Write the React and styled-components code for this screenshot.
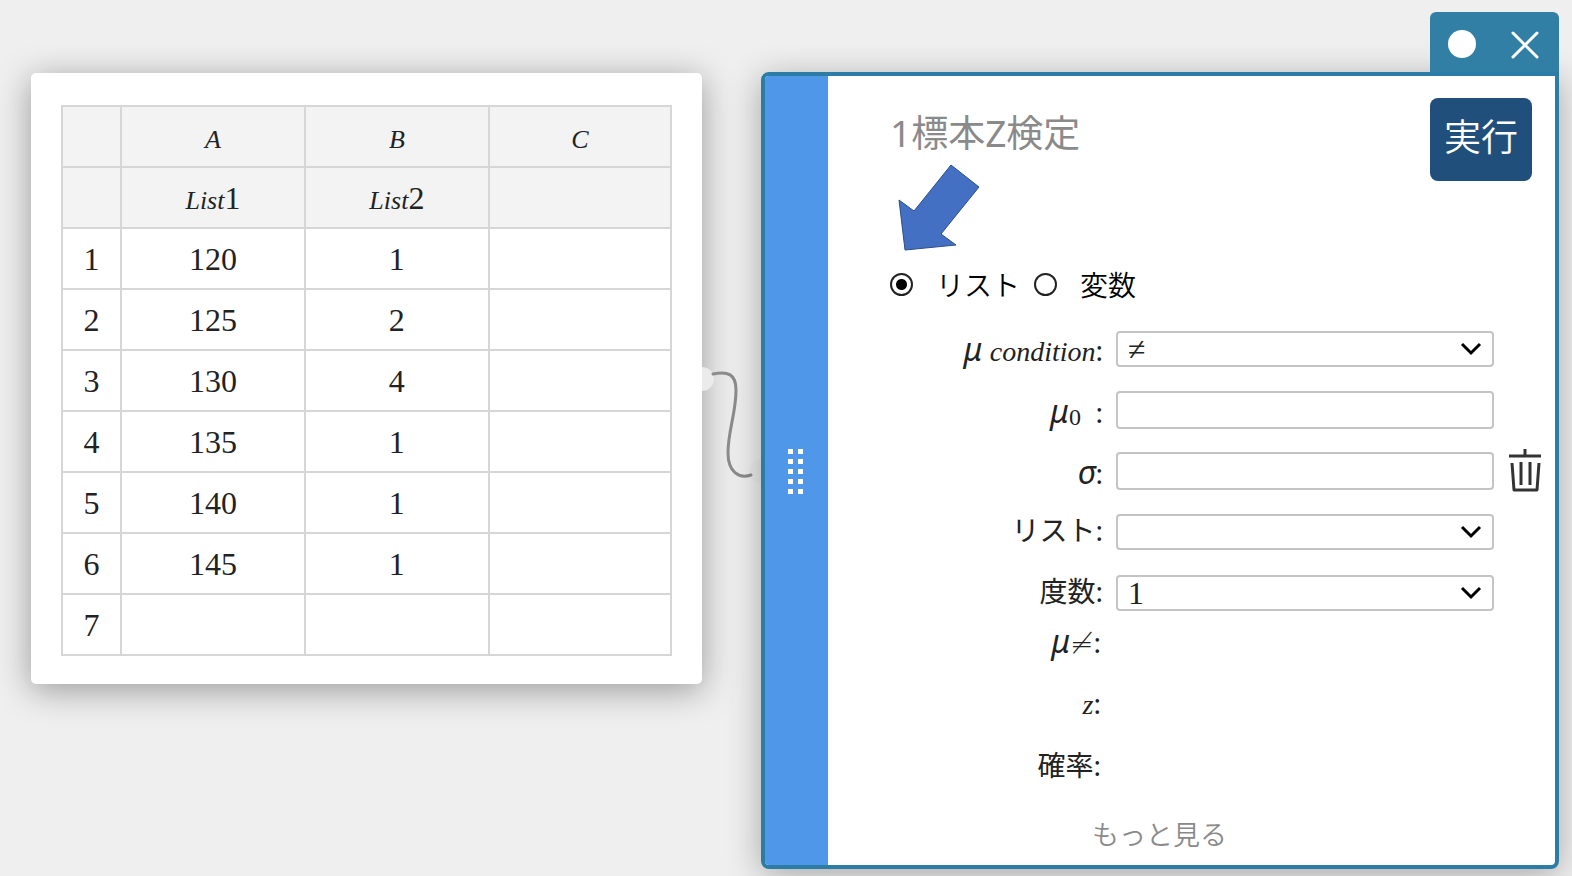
import { useState } from 'react'
import styled, { createGlobalStyle } from 'styled-components'

const rows = [
  ['120', '1', ''],
  ['125', '2', ''],
  ['130', '4', ''],
  ['135', '1', ''],
  ['140', '1', ''],
  ['145', '1', ''],
  ['', '', '']
]

const DataTable = () => (
  <SheetCard>
    <Sheet>
      <colgroup>
        <IndexCol />
        <DataCol />
        <DataCol />
        <col />
      </colgroup>
      <thead>
        <tr>
          <HeadCell />
          <HeadCell><Italic>A</Italic></HeadCell>
          <HeadCell><Italic>B</Italic></HeadCell>
          <HeadCell><Italic>C</Italic></HeadCell>
        </tr>
        <tr>
          <HeadCell />
          <HeadCell><Italic>List</Italic>1</HeadCell>
          <HeadCell><Italic>List</Italic>2</HeadCell>
          <HeadCell />
        </tr>
      </thead>
      <tbody>
        {rows.map((row, i) => (
          <tr key={i}>
            <RowHead scope='row'>{i + 1}</RowHead>
            {row.map((value, j) => <Cell key={j}>{value}</Cell>)}
          </tr>
        ))}
      </tbody>
    </Sheet>
  </SheetCard>
)

const Connector = () => (
  <ConnectorSvg viewBox='0 0 59 124' aria-hidden='true'>
    <path d='M0 15a12 12 0 0 1 0 24z' fill='#ebebeb' />
    <path d='M59 107a12 12 0 0 0 0 24z' fill='#ebebeb' />
    <path d='M11 22C26 19 34 22 34 38C34 62 26 78 26 101C26 120 37 127 49 123' fill='none' stroke='#8c8c8c' strokeWidth='3' strokeLinecap='round' />
  </ConnectorSvg>
)

const SelectField = ({ id, options }) => (
  <SelectWrap>
    <Select id={id} defaultValue={options[0]}>
      {options.map(option => <option key={option} value={option}>{option}</option>)}
    </Select>
    <Chevron viewBox='0 0 22 14' aria-hidden='true'>
      <path d='M2 2L11 11L20 2' fill='none' stroke='#000' strokeWidth='3' />
    </Chevron>
  </SelectWrap>
)

const TestForm = () => {
  const [source, setSource] = useState('list')
  const onChange = (e) => setSource(e.target.value)

  return (
    <Form onSubmit={(e) => e.preventDefault()}>
      <Header>
        <div>
          <Title>1標本Z検定</Title>
          <Arrow viewBox='0 0 82 88' aria-hidden='true'>
            <path d='M53 1L81 23L43 70L58 81L7 86L1 36L16 47Z' fill='#4470c4' stroke='#2b5089' strokeWidth='1' />
          </Arrow>
        </div>
        <RunButton type='submit'>実行</RunButton>
      </Header>

      <RadioRow>
        <Radio id='source-list' type='radio' name='source' value='list' checked={source === 'list'} onChange={onChange} />
        <RadioLabel htmlFor='source-list'>リスト</RadioLabel>
        <Radio id='source-var' type='radio' name='source' value='var' checked={source === 'var'} onChange={onChange} />
        <RadioLabel htmlFor='source-var'>変数</RadioLabel>
      </RadioRow>

      <Fields>
        <MathLabel htmlFor='condition'><Symbol>μ</Symbol> <Italic $size={28}>condition</Italic>:</MathLabel>
        <SelectField id='condition' options={['≠', '<', '>']} />

        <MathLabel htmlFor='mu0'><Symbol>μ</Symbol><Sub>0</Sub>&nbsp; :</MathLabel>
        <Input id='mu0' type='text' />

        <MathLabel htmlFor='sigma'><Symbol>σ</Symbol>:</MathLabel>
        <Input id='sigma' type='text' />
        <TrashButton type='button' aria-label='削除'>
          <svg width='34' height='44' viewBox='0 0 34 44' fill='none' stroke='#333' strokeWidth='3'>
            <path d='M1 7H33M17 0V7' />
            <path d='M4 14L6 41H29L31 14' strokeLinejoin='round' />
            <path d='M13 13V36M22 13V36' />
          </svg>
        </TrashButton>

        <Label htmlFor='list'>リスト:</Label>
        <SelectField id='list' options={['', 'List1', 'List2']} />

        <Label htmlFor='freq'>度数:</Label>
        <SelectField id='freq' options={['1', 'List1', 'List2']} />
      </Fields>

      <Results>
        <Result><Symbol>μ</Symbol><Operator>≠</Operator>:</Result>
        <Result><Italic $size={28}>z</Italic>:</Result>
        <Result>確率:</Result>
      </Results>

      <MoreButton type='button'>もっと見る</MoreButton>
    </Form>
  )
}

const App = () => (
  <Page>
    <GlobalStyle />
    <DataTable />
    <Connector />
    <Window>
      <WindowTab>
        <TabButton type='button' aria-label='色'>
          <svg width='30' height='30' viewBox='0 0 30 30'>
            <circle cx='15' cy='15' r='14' fill='#fff' />
          </svg>
        </TabButton>
        <TabButton type='button' aria-label='閉じる'>
          <svg width='30' height='30' viewBox='0 0 30 30'>
            <path d='M3 4L27 28M27 4L3 28' stroke='#fff' strokeWidth='3' strokeLinecap='round' />
          </svg>
        </TabButton>
      </WindowTab>
      <Panel>
        <Handle>
          {Array.from({ length: 10 }, (_, i) => <Dot key={i} />)}
        </Handle>
        <TestForm />
      </Panel>
    </Window>
  </Page>
)

const sans = `'Noto Sans', 'Noto Sans CJK JP', sans-serif`
const serif = `'Liberation Serif', 'Noto Sans CJK JP', serif`

const GlobalStyle = createGlobalStyle`
  * {
    box-sizing: border-box;
  }

  body {
    margin: 0;
    background: #efefef;
    color: #222;
    font-family: ${sans};
  }
`;

const Page = styled.main`
  display: grid;
  grid-template-columns: minmax(0, 671fr) 59px minmax(0, 798fr);
  align-items: start;
  min-height: 100vh;
  padding: 12px 13px 8px 31px;
  overflow: hidden;
`;

const SheetCard = styled.section`
  margin-top: 61px;
  padding: 32px 30px 28px;
  background: #fff;
  border-radius: 5px;
  box-shadow: 0 6px 34px rgba(0, 0, 0, 0.36);
`;

const Sheet = styled.table`
  width: 100%;
  table-layout: fixed;
  border-collapse: collapse;
  font-family: ${serif};
  font-size: 32px;
  line-height: 36px;
`;

const IndexCol = styled.col`
  width: 59px;
`;

const DataCol = styled.col`
  width: 30.2%;
`;

const Cell = styled.td`
  height: 61px;
  padding: 0;
  border: 2px solid #d6d6d6;
  text-align: center;
`;

const HeadCell = styled(Cell).attrs({ as: 'th' })`
  padding-top: 3px;
  background: #f3f3f3;
  font-weight: 400;
`;

const RowHead = styled(Cell).attrs({ as: 'th' })`
  font-weight: 400;
`;

const Italic = styled.i`
  font-family: ${serif};
  font-size: ${({ $size }) => $size || 26}px;
`;

const ConnectorSvg = styled.svg`
  width: 59px;
  height: 124px;
  margin-top: 340px;
  overflow: visible;
`;

const Window = styled.section`
  display: flex;
  flex-direction: column;
`;

const WindowTab = styled.div`
  position: relative;
  z-index: 1;
  display: flex;
  align-self: flex-end;
  align-items: center;
  justify-content: space-between;
  width: 129px;
  height: 60px;
  padding: 4px 19px 0 17px;
  background: #317fa5;
  border-radius: 6px 6px 0 0;
`;

const TabButton = styled.button`
  display: flex;
  padding: 0;
  border: 0;
  background: none;
  cursor: pointer;
`;

const Panel = styled.div`
  display: flex;
  border: 4px solid #2c7da5;
  border-radius: 8px 0 8px 8px;
  background: #fff;
  box-shadow: 0 6px 34px rgba(0, 0, 0, 0.3);
`;

const Handle = styled.div`
  display: grid;
  grid-template-columns: 5px 5px;
  grid-auto-rows: 5px;
  gap: 5px;
  place-content: center;
  width: 63px;
  padding: 2px 3px 0 0;
  border-radius: 4px 0 0 4px;
  background: #4e97e9;
`;

const Dot = styled.span`
  background: #fff;
`;

const Form = styled.form`
  flex: 1;
  min-width: 0;
  padding: 22px 12px 12px 62px;
`;

const Header = styled.header`
  display: flex;
  align-items: flex-start;
  justify-content: space-between;
  padding-right: 11px;
`;

const Title = styled.h1`
  margin: 8px 0 0;
  color: #8a8a8a;
  font-size: 37px;
  font-weight: 400;
  line-height: 54px;
`;

const Arrow = styled.svg`
  display: block;
  width: 82px;
  height: 88px;
  margin: 4px 0 0 8px;
`;

const RunButton = styled.button`
  width: 102px;
  height: 83px;
  padding: 0 0 6px;
  border: 0;
  border-radius: 8px;
  background: #204f7b;
  color: #fff;
  font-family: ${sans};
  font-size: 37px;
  font-weight: 350;
  line-height: 48px;
  cursor: pointer;
`;

const RadioRow = styled.div`
  display: flex;
  align-items: center;
  height: 48px;
  margin-top: 8px;
`;

const Radio = styled.input`
  appearance: none;
  width: 23px;
  height: 23px;
  margin: 0;
  border: 2px solid #222;
  border-radius: 50%;

  &:checked {
    background: radial-gradient(circle, #000 5px, #fff 6px);
  }
`;

const RadioLabel = styled.label`
  margin: 0 14px 0 23px;
  font-size: 28px;
  font-weight: 350;
  color: #000;
`;

const Fields = styled.div`
  display: grid;
  grid-template-columns: 213px minmax(0, 1fr) 36px;
  grid-auto-rows: 61px;
  align-items: center;
  column-gap: 13px;
  margin-top: 10px;
`;

const Label = styled.label`
  grid-column: 1;
  padding-bottom: 4px;
  font-size: 28px;
  font-weight: 400;
  line-height: 40px;
  text-align: right;
  white-space: nowrap;
`;

const MathLabel = styled(Label)`
  padding: 4px 0 0;
`;

const Symbol = styled.i`
  font-family: ${sans};
  font-size: 32px;
  font-weight: 400;
  line-height: 36px;
`;

const Operator = styled.span`
  font-family: 'DejaVu Sans', sans-serif;
  font-size: 28px;
  font-weight: 200;
  line-height: 32px;
`;

const Sub = styled.sub`
  font-family: ${serif};
  font-size: 24px;
  line-height: 0;
  vertical-align: -2px;
`;

const Input = styled.input`
  width: 100%;
  height: 38px;
  padding: 0 12px;
  border: 2px solid #c4c4c4;
  border-radius: 4px;
  background: #fff;
  font-family: ${serif};
  font-size: 32px;
`;

const SelectWrap = styled.div`
  position: relative;
`;

const Select = styled.select`
  display: block;
  appearance: none;
  width: 100%;
  height: 36px;
  padding: 0 40px 0 10px;
  border: 2px solid #c4c4c4;
  border-radius: 4px;
  background: #fff;
  color: #222;
  font-family: ${serif};
  font-size: 32px;
  line-height: 32px;
`;

const Chevron = styled.svg`
  position: absolute;
  top: 11px;
  right: 12px;
  width: 22px;
  height: 14px;
  pointer-events: none;
`;

const TrashButton = styled.button`
  padding: 0;
  border: 0;
  background: none;
  line-height: 0;
  cursor: pointer;
`;

const Results = styled.div`
  display: grid;
  grid-auto-rows: 62px;
  width: 211px;
`;

const Result = styled.p`
  margin: 0;
  font-size: 28px;
  font-weight: 400;
  line-height: 36px;
  text-align: right;
`;

const MoreButton = styled.button`
  display: block;
  margin: 8px auto 0;
  padding: 0 114px 0 0;
  border: 0;
  background: none;
  color: #8a8a8a;
  font-family: ${sans};
  font-size: 27px;
  font-weight: 350;
  line-height: 36px;
  cursor: pointer;
`;

export default App
